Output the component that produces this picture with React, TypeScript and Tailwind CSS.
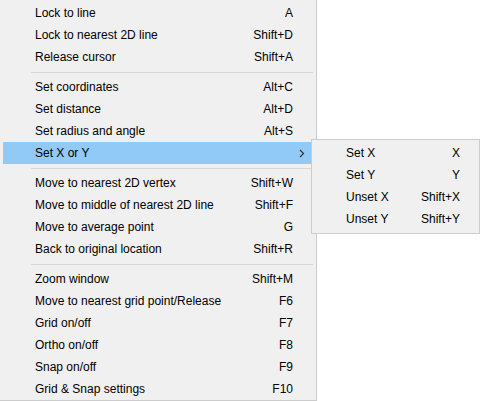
const font = { fontFamily: '"Liberation Sans", Arial, sans-serif' }

type Entry = { label: string; key?: string; sub?: boolean; active?: boolean } | 'sep'

const mainItems: Entry[] = [
  { label: 'Lock to line', key: 'A' },
  { label: 'Lock to nearest 2D line', key: 'Shift+D' },
  { label: 'Release cursor', key: 'Shift+A' },
  'sep',
  { label: 'Set coordinates', key: 'Alt+C' },
  { label: 'Set distance', key: 'Alt+D' },
  { label: 'Set radius and angle', key: 'Alt+S' },
  { label: 'Set X or Y', sub: true, active: true },
  'sep',
  { label: 'Move to nearest 2D vertex', key: 'Shift+W' },
  { label: 'Move to middle of nearest 2D line', key: 'Shift+F' },
  { label: 'Move to average point', key: 'G' },
  { label: 'Back to original location', key: 'Shift+R' },
  'sep',
  { label: 'Zoom window', key: 'Shift+M' },
  { label: 'Move to nearest grid point/Release', key: 'F6' },
  { label: 'Grid on/off', key: 'F7' },
  { label: 'Ortho on/off', key: 'F8' },
  { label: 'Snap on/off', key: 'F9' },
  { label: 'Grid & Snap settings', key: 'F10' },
]

const subItems = [
  { label: 'Set X', key: 'X' },
  { label: 'Set Y', key: 'Y' },
  { label: 'Unset X', key: 'Shift+X' },
  { label: 'Unset Y', key: 'Shift+Y' },
]

function Chevron() {
  return (
    <svg width="6" height="9" viewBox="0 0 6 9" className="block">
      <path d="M1 1 L4.5 4.5 L1 8" fill="none" stroke="#333" strokeWidth="1.2" />
    </svg>
  )
}

export default function App() {
  return (
    <div className="relative w-[480px] h-[401px] bg-white text-[12px] text-black" style={font}>
      {/* Main context menu */}
      <div className="w-[317px] h-[401px] bg-[#f0f0f0] border-r border-b border-[#cccccc] pt-[2px] px-[3px]">
        {mainItems.map((item, i) =>
          item === 'sep' ? (
            <div key={i} className="h-[8px] flex items-center pl-[28px]">
              <div className="h-px w-full bg-[#d7d7d7]" />
            </div>
          ) : (
            <div
              key={i}
              className={`h-[22px] flex items-center pl-[32px] pr-[20px] ${item.active ? 'bg-[#91c9f7]' : ''}`}
            >
              <span className="flex-1">{item.label}</span>
              {item.key && <span>{item.key}</span>}
              {item.sub && (
                <span className="-mr-[12px]">
                  <Chevron />
                </span>
              )}
            </div>
          )
        )}
      </div>

      {/* Submenu */}
      <div className="absolute left-[311px] top-[139px] w-[169px] h-[95px] bg-[#f0f0f0] border border-[#cccccc] py-[2px] px-[2px]">
        {subItems.map((s) => (
          <div key={s.label} className="h-[22px] flex items-center pl-[32px] pr-[17px]">
            <span className="flex-1">{s.label}</span>
            <span>{s.key}</span>
          </div>
        ))}
      </div>
    </div>
  )
}
